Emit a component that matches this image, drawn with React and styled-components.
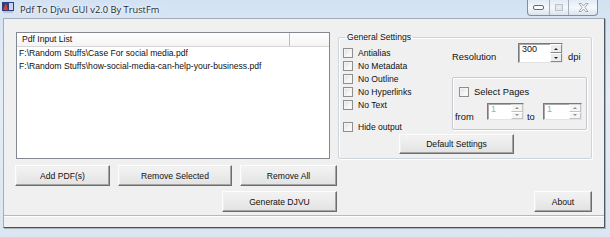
import React from "react";
import styled, { createGlobalStyle } from "styled-components";

const Global = createGlobalStyle`
  html, body { margin: 0; padding: 0; background: #fff; }
  body { font-family: "Liberation Sans", Arial, sans-serif; }
`;

const Window = styled.div`
  width: 610px;
  height: 237px;
  display: flex;
  flex-direction: column;
  background: linear-gradient(180deg, #d3e2f2 0%, #e4edf7 40%, #dbe6f2 100%);
  box-sizing: border-box;
  overflow: hidden;
`;

const TitleBar = styled.div`
  height: 18px;
  display: flex;
  align-items: flex-start;
  flex: none;
`;

const AppIcon = styled.svg`
  margin: 2px 0 0 2px;
  flex: none;
`;

const Title = styled.div`
  margin-left: 6px;
  margin-top: 3px;
  font-family: "Open Sans", "Liberation Sans", sans-serif;
  font-size: 9.3px;
  color: #1e2a38;
  text-shadow: 0 0 6px #fff, 0 0 3px #fff;
`;

const Controls = styled.div`
  margin-left: auto;
  margin-right: 12px;
  display: flex;
  height: 15px;
  border: 1px solid #7f8ea1;
  border-top: none;
  border-radius: 0 0 4px 4px;
  background: linear-gradient(180deg, #e2eaf3 0%, #f6f8fb 50%, #dbe4ee 100%);
  overflow: hidden;
`;

const CtlBtn = styled.div`
  width: ${(p) => p.$w}px;
  display: flex;
  align-items: center;
  justify-content: center;
  border-left: ${(p) => (p.$first ? "none" : "1px solid #a3b0bf")};
`;

const FrameBody = styled.div`
  flex: 1;
  display: flex;
  padding: 0 5px 9px 3px;
  min-height: 0;
`;

const Client = styled.div`
  flex: 1;
  display: flex;
  flex-direction: column;
  background: #f0f0f0;
  border: 1px solid;
  border-color: #a3acb7 #4f5760 #4a525b #a3acb7;
  box-shadow: 1px 1px 0 #aab3bd;
  font-size: 8.6px;
  color: #111;
`;

const Main = styled.div`
  flex: 1;
  display: flex;
  flex-direction: column;
  padding: 13px 0 0 11px;
`;

const TopRow = styled.div`
  display: flex;
  align-items: flex-start;
`;

const ListView = styled.div`
  margin-left: 1px;
  width: 314px;
  height: 127px;
  box-sizing: border-box;
  background: #fff;
  border: 1px solid #828790;
  display: flex;
  flex-direction: column;
`;

const ListHeader = styled.div`
  display: flex;
  height: 13px;
  flex: none;
  border-bottom: 1px solid #d5d5d5;
  background: linear-gradient(180deg, #fff 0%, #f4f4f4 100%);
`;

const HeaderCell = styled.div`
  width: ${(p) => (p.$w ? `${p.$w}px` : "auto")};
  flex: ${(p) => (p.$w ? "none" : "1")};
  padding-left: 5px;
  line-height: 13px;
  border-right: ${(p) => (p.$w ? "1px solid #bdbdbd" : "none")};
  box-sizing: border-box;
`;

const ListItem = styled.div`
  padding-left: 2px;
  line-height: 12.5px;
  white-space: nowrap;
  &:first-of-type { margin-top: 2px; }
`;

const GroupBox = styled.fieldset`
  margin: 0 0 0 8px;
  padding: 0 0 4px 4px;
  width: 254px;
  height: 127px;
  box-sizing: border-box;
  border: 1px solid #cdd5da;
  border-radius: 2px;
  box-shadow: inset 1px 1px 0 #fff, 1px 1px 0 #fff;
  min-width: 0;
  display: flex;
  flex-direction: column;
`;

const Legend = styled.legend`
  margin-left: 2px;
  padding: 0 2px;
  line-height: 10px;
  font-size: 8.6px;
`;

const GroupGrid = styled.div`
  display: grid;
  grid-template-columns: 109px 1fr;
  flex: 1;
`;

const CheckList = styled.div`
  display: flex;
  flex-direction: column;
  padding-top: 4px;
`;

const CheckRow = styled.label`
  display: flex;
  align-items: center;
  height: 13px;
  gap: 5px;
  margin-top: ${(p) => p.$gap || 0}px;
`;

const Box = styled.span`
  width: 10px;
  height: 10px;
  box-sizing: border-box;
  border: 1px solid #8f8f8f;
  background: linear-gradient(135deg, #dcdcdc 0%, #f6f6f6 60%, #fff 100%);
  box-shadow: inset 0 0 0 1px #f4f4f4;
  flex: none;
`;

const RightCol = styled.div`
  display: flex;
  flex-direction: column;
`;

const ResRow = styled.div`
  display: flex;
  align-items: flex-start;
  height: 34px;
  padding-top: 1px;
`;

const Label = styled.span`
  padding-top: ${(p) => p.$pt || 0}px;
  width: ${(p) => (p.$w ? `${p.$w}px` : "auto")};
  margin-left: ${(p) => p.$ml || 0}px;
  font-size: ${(p) => p.$fs || 8.6}px;
  flex: none;
`;

const Spin = styled.div`
  width: ${(p) => p.$w}px;
  height: ${(p) => p.$h}px;
  box-sizing: border-box;
  display: flex;
  background: #fff;
  border: 1px solid;
  border-color: #7a7a7a #e3e3e3 #e3e3e3 #7a7a7a;
  box-shadow: inset 1px 1px 0 #a9a9a9;
  flex: none;
`;

const SpinValue = styled.div`
  flex: 1;
  padding: 0 0 0 3px;
  line-height: 10px;
  font-size: 9px;
  color: ${(p) => (p.$disabled ? "#a9a9a9" : "#111")};
`;

const SpinButtons = styled.div`
  width: 12px;
  display: flex;
  flex-direction: column;
  flex: none;
`;

const SpinHalf = styled.div`
  flex: 1;
  display: flex;
  align-items: center;
  justify-content: center;
  background: #ececec;
  border: 1px solid;
  border-color: #fff #8a8a8a #8a8a8a #fff;
  box-sizing: border-box;
  opacity: ${(p) => (p.$disabled ? 0.5 : 1)};
`;

const Arrow = styled.span`
  width: 0;
  height: 0;
  border-left: 2px solid transparent;
  border-right: 2px solid transparent;
  ${(p) =>
    p.$up
      ? "border-bottom: 2px solid #222;"
      : "border-top: 2px solid #222;"}
`;

const InnerBox = styled.div`
  width: 135px;
  height: 53px;
  box-sizing: border-box;
  border: 1px solid #c4cacf;
  box-shadow: inset 1px 1px 0 #fff, 1px 1px 0 #fff;
  border-radius: 2px;
  display: flex;
  flex-direction: column;
  padding: 7px 0 0 6px;
`;

const FromRow = styled.div`
  display: flex;
  align-items: flex-start;
  margin-top: 5px;
  margin-left: -4px;
`;

const Button = styled.button`
  width: ${(p) => p.$w}px;
  height: ${(p) => p.$h || 21}px;
  margin-left: ${(p) => p.$ml || 0}px;
  box-sizing: border-box;
  padding: 0;
  font-family: "Liberation Sans", Arial, sans-serif;
  font-size: 8.6px;
  color: #111;
  background: linear-gradient(180deg, #f3f3f3 0%, #ebebeb 50%, #e2e2e2 100%);
  border: 1px solid;
  border-color: #fdfdfd #6d6d6d #6d6d6d #fdfdfd;
  box-shadow: inset -1px -1px 0 #a4a4a4, inset 1px 1px 0 #f0f0f0;
  flex: none;
`;

const DefaultRow = styled.div`
  padding-left: 56px;
  margin-top: auto;
`;

const ButtonRow = styled.div`
  display: flex;
  gap: 8px;
  margin-top: ${(p) => p.$mt}px;
`;

const StatusBar = styled.div`
  height: 11px;
  margin-top: 2px;
  border-top: 1px solid #b9b9b9;
  box-shadow: inset 0 1px 0 #fff;
  flex: none;
`;

function Check({ label, gap }) {
  return (
    <CheckRow $gap={gap}>
      <Box />
      <span>{label}</span>
    </CheckRow>
  );
}

function SpinBox({ value, w, h, disabled }) {
  return (
    <Spin $w={w} $h={h}>
      <SpinValue $disabled={disabled}>{value}</SpinValue>
      <SpinButtons>
        <SpinHalf $disabled={disabled}><Arrow $up /></SpinHalf>
        <SpinHalf $disabled={disabled}><Arrow /></SpinHalf>
      </SpinButtons>
    </Spin>
  );
}

export default function App() {
  return (
    <>
      <Global />
      <Window>
        <TitleBar>
          <AppIcon width="12" height="11" viewBox="0 0 12 11">
            <rect x="0" y="0" width="12" height="9" fill="#2b3f7a" />
            <path d="M1 8 L4 1 L6 8 Z" fill="#e23a3a" />
            <rect x="7" y="1" width="4" height="7" fill="#c9d3ec" />
            <rect x="1" y="9.5" width="10" height="1" fill="#9aa4b4" />
          </AppIcon>
          <Title>Pdf To Djvu GUI v2.0 By TrustFm</Title>
          <Controls>
            <CtlBtn $w={21} $first>
              <svg width="11" height="5" viewBox="0 0 11 5">
                <rect x="0.5" y="0.5" width="10" height="4" rx="1.5" fill="#fff" stroke="#5d6b7c" />
              </svg>
            </CtlBtn>
            <CtlBtn $w={18}>
              <svg width="8" height="7" viewBox="0 0 8 7">
                <rect x="0.5" y="0.5" width="7" height="6" fill="none" stroke="#b8c2cd" />
                <rect x="2" y="2" width="4" height="3" fill="none" stroke="#d5dce4" />
              </svg>
            </CtlBtn>
            <CtlBtn $w={28}>
              <svg width="11" height="9" viewBox="0 0 11 9">
                <path d="M1 0.5 H3.5 L5.5 3 L7.5 0.5 H10 L7 4.5 L10 8.5 H7.5 L5.5 6 L3.5 8.5 H1 L4 4.5 Z" fill="#f4f6f9" stroke="#8e99a6" strokeWidth="0.8" />
              </svg>
            </CtlBtn>
          </Controls>
        </TitleBar>
        <FrameBody>
          <Client>
            <Main>
              <TopRow>
                <ListView>
                  <ListHeader>
                    <HeaderCell $w={273}>Pdf Input List</HeaderCell>
                    <HeaderCell />
                  </ListHeader>
                  <ListItem>F:\Random Stuffs\Case For social media.pdf</ListItem>
                  <ListItem>F:\Random Stuffs\how-social-media-can-help-your-business.pdf</ListItem>
                </ListView>
                <GroupBox>
                  <Legend>General Settings</Legend>
                  <GroupGrid>
                    <CheckList>
                      <Check label="Antialias" />
                      <Check label="No Metadata" />
                      <Check label="No Outline" />
                      <Check label="No Hyperlinks" />
                      <Check label="No Text" />
                      <Check label="Hide output" gap={9} />
                    </CheckList>
                    <RightCol>
                      <ResRow>
                        <Label $w={66} $pt={8} $fs={9.4}>Resolution</Label>
                        <SpinBox value="300" w={45} h={20} />
                        <Label $ml={5} $pt={8} $fs={9.4}>dpi</Label>
                      </ResRow>
                      <InnerBox>
                        <CheckRow>
                          <Box />
                          <Label $fs={9.4}>Select Pages</Label>
                        </CheckRow>
                        <FromRow>
                          <Label $w={32} $pt={8} $fs={9.4}>from</Label>
                          <SpinBox value="1" w={37} h={17} disabled />
                          <Label $w={16} $ml={3} $pt={8} $fs={9.4}>to</Label>
                          <SpinBox value="1" w={39} h={17} disabled />
                        </FromRow>
                      </InnerBox>
                    </RightCol>
                  </GroupGrid>
                  <DefaultRow>
                    <Button $w={115} $h={20}>Default Settings</Button>
                  </DefaultRow>
                </GroupBox>
              </TopRow>
              <ButtonRow $mt={6}>
                <Button $w={95}>Add PDF(s)</Button>
                <Button $w={114}>Remove Selected</Button>
                <Button $w={97}>Remove All</Button>
              </ButtonRow>
              <ButtonRow $mt={5}>
                <Button $w={115} $ml={207}>Generate DJVU</Button>
                <Button $w={58} $ml={189}>About</Button>
              </ButtonRow>
            </Main>
            <StatusBar />
          </Client>
        </FrameBody>
      </Window>
    </>
  );
}
